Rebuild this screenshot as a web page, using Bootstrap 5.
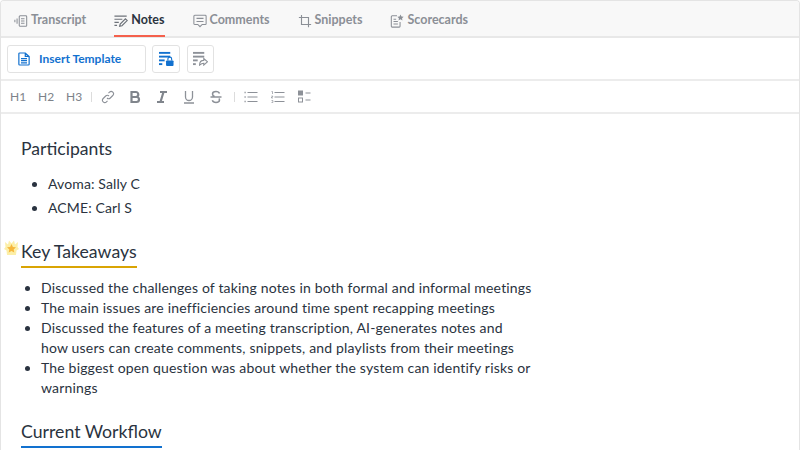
<!DOCTYPE html>
<html lang="en">
<head>
  <meta charset="UTF-8">
  <title>Notes</title>
  <link href="https://cdn.jsdelivr.net/npm/bootstrap@5.3.3/dist/css/bootstrap.min.css" rel="stylesheet">
  <style>
    html, body { height: 450px; overflow: hidden; }
    body { font-family: "Lato", sans-serif; color: #2a3340; background: #fff; }
    .shell { height: 450px; border: 1px solid #e4e4e4; border-bottom: 0; border-radius: 4px 4px 0 0; overflow: hidden; }

    /* onglets */
    .tabbar { height: 37px; background: #f8f8f8; border-bottom: 2px solid #e8e8e8; padding-left: 13px; gap: 28px; }
    .tab-item { height: 36px; padding-top: 5px; font-size: 12.5px; font-weight: 700; color: #8b8f96; gap: 3px; border-bottom: 2px solid transparent; }
    .tab-item svg { width: 14px; height: 14px; }
    .tab-item.is-active { color: #2b3440; border-bottom-color: #f4604c; }

    /* barre du template */
    .tplbar { height: 43px; border-bottom: 2px solid #ececec; padding: 6px; gap: 6px; }
    .tpl-btn { width: 139px; height: 28px; border: 1px solid #e2e2e2; border-radius: 3px; background: #fff; color: #1271cf; font-size: 12px; font-weight: 700; gap: 9px; padding: 0 0 0 10px; }
    .tpl-icon { width: 28px; height: 28px; border: 1px solid #e2e2e2; border-radius: 3px; background: #fff; padding: 0; }
    .tpl-icon + .tpl-icon { margin-left: 1px; width: 27px; }

    /* barre de l'éditeur */
    .edbar { height: 33px; border-bottom: 2px solid #ececec; padding-left: 9px; color: #8d9198; }
    .ed-h { font-size: 12px; font-weight: 400; width: 28px; padding-top: 1px; color: #7d8289; }
    .ed-sep { width: 1px; height: 10px; background: #dcdcdc; margin-left: -3px; margin-right: 9px; }
    .ed-sep.tail { margin-left: -2px; }
    .ed-ico { width: 27px; }
    .ed-ico svg { width: 14px; height: 14px; }

    /* contenu */
    .note-body { padding: 23px 20px 0; position: relative; }
    .note-title { font-size: 17.6px; font-weight: 400; line-height: 24px; margin: 0; color: #2a3340; }
    .bullets-a { font-size: 14px; line-height: 24px; margin: 11px 0 0; padding-left: 27px; letter-spacing: .12px; }
    .bullets-b { font-size: 14px; line-height: 20px; margin: 10px 0 0; padding-left: 20px; width: 512px; letter-spacing: .17px; }
    .key-head { display: inline-block; font-size: 17.7px; line-height: 24px; padding: 0 0 2px 0; margin-top: 20px; position: relative; }
    .key-head.gold { border-bottom: 2px solid #d9a404; }
    .key-head.blue { border-bottom: 2px solid #1271cf; margin-top: 22px; }
    .sparkle { position: absolute; left: -17px; top: 0; width: 15px; height: 16px; }
  </style>
</head>
<body>
<div class="shell">
  <div class="tabbar d-flex align-items-start">
    <div class="tab-item d-flex align-items-center">
      <svg viewBox="0 0 16 16" fill="none" stroke="#8b8f96" stroke-width="1.2"><rect x="6" y="2" width="8.500" height="12" rx="1"/><path d="M8 5.500h4M8 8h4M8 10.500h4M1 6.500v3M3.500 5v6"/></svg>Transcript
    </div>
    <div class="tab-item is-active d-flex align-items-center">
      <svg viewBox="0 0 16 16" fill="none" stroke="#6d7279" stroke-width="1.400"><path d="M0.500 2.500h14M0.500 6h9M0.500 9.500h5M0.500 13h3M6.500 14l.6-2.600L13 5.500l2 2-5.900 5.900z"/></svg>Notes
    </div>
    <div class="tab-item d-flex align-items-center">
      <svg viewBox="0 0 16 16" fill="none" stroke="#8b8f96" stroke-width="1.200"><path d="M2 1.500h12a1 1 0 0 1 1 1v8.500a1 1 0 0 1-1 1h-3.500L8 14.500 5.500 12H2a1 1 0 0 1-1-1V2.500a1 1 0 0 1 1-1zM4 5h8M4 8.500h8"/></svg>Comments
    </div>
    <div class="tab-item d-flex align-items-center">
      <svg viewBox="0 0 16 16" fill="none" stroke="#8b8f96" stroke-width="1.300"><path d="M4 1v11h11M1 4h11v11"/></svg>Snippets
    </div>
    <div class="tab-item d-flex align-items-center">
      <svg viewBox="0 0 16 16" fill="none" stroke="#8b8f96" stroke-width="1.200"><path d="M8 2H2.500a1 1 0 0 0-1 1v11a1 1 0 0 0 1 1h8a1 1 0 0 0 1-1V9M4 6h3M4 8.500h5M4 11.500h5"/><path d="M12 .5l1.100 2.300 2.500.3-1.800 1.700.4 2.500-2.200-1.200-2.200 1.200.4-2.500-1.800-1.700 2.500-.3z" fill="#8b8f96" stroke="none"/></svg>Scorecards
    </div>
  </div>

  <div class="tplbar d-flex align-items-center">
    <button class="tpl-btn d-flex align-items-center" type="button">
      <svg width="12" height="14" viewBox="0 0 14 16" fill="none" stroke="#1271cf" stroke-width="1.400"><path d="M2 1h6.500L13 5v9a1 1 0 0 1-1 1H2a1 1 0 0 1-1-1V2a1 1 0 0 1 1-1zM8.500 1v4H13M3.500 7.500h7M3.500 10h7M3.500 12.500h7"/></svg>
      Insert Template
    </button>
    <button class="tpl-icon d-flex align-items-center justify-content-center" type="button">
      <svg width="15" height="15" viewBox="0 0 16 16"><g fill="#1271cf"><rect x="0" y="1" width="12" height="2"/><rect x="0" y="5" width="12" height="2"/><rect x="0" y="9" width="6" height="2"/><rect x="0" y="13" width="3.500" height="2"/><rect x="7.500" y="10" width="8" height="6" rx="1"/></g><path d="M9.500 10V8.500a2 2 0 0 1 4 0V10" fill="none" stroke="#1271cf" stroke-width="1.200"/></svg>
    </button>
    <button class="tpl-icon d-flex align-items-center justify-content-center" type="button">
      <svg width="15" height="15" viewBox="0 0 16 16"><g fill="#8d9198"><rect x="0" y="1" width="12" height="2"/><rect x="0" y="5" width="12" height="2"/><rect x="0" y="9" width="5" height="2"/><rect x="0" y="13" width="3" height="2"/></g><path d="M7 15c0-3 2-5 4.500-5V8l4 3.500-4 3.500v-2c-1.800 0-3 .6-4.500 2z" fill="none" stroke="#8d9198" stroke-width="1.200"/></svg>
    </button>
  </div>

  <div class="edbar d-flex align-items-center">
    <span class="ed-h">H1</span><span class="ed-h">H2</span><span class="ed-h">H3</span>
    <span class="ed-sep"></span>
    <span class="ed-ico d-flex"><svg viewBox="0 0 14 14" fill="none" stroke="#8d9198" stroke-width="1.100"><path d="M6 8a2.300 2.300 0 0 0 3.300 0l2.500-2.500a2.300 2.300 0 0 0-3.300-3.300L7.500 3.200M8 6a2.300 2.300 0 0 0-3.300 0L2.200 8.500a2.300 2.300 0 0 0 3.300 3.300l1-1"/></svg></span>
    <span class="ed-ico d-flex"><svg viewBox="0 0 14 14" fill="none" stroke="#80858c" stroke-width="2.200"><path d="M3.500 2h4.300a2.400 2.400 0 0 1 0 5H3.500zM3.500 7h5a2.500 2.500 0 0 1 0 5h-5zM3.500 1v12"/></svg></span>
    <span class="ed-ico d-flex"><svg viewBox="0 0 14 14" fill="none" stroke="#80858c" stroke-width="2.200"><path d="M5 2h7M2 12h7M8.500 2l-3 10"/></svg></span>
    <span class="ed-ico d-flex"><svg viewBox="0 0 14 14" fill="none" stroke="#8d9198" stroke-width="1.300"><path d="M3.500 1v6a3.500 3.500 0 0 0 7 0V1M2 13h10"/></svg></span>
    <span class="ed-ico d-flex"><svg viewBox="0 0 14 14" fill="none" stroke="#8d9198" stroke-width="1.500"><path d="M10.500 3.500C10 2 8.500 1.500 7 1.500c-2 0-3.500 1-3.500 2.500 0 1.200.8 2 2 2.500M1.500 7h11M9.800 8.500c.5.500.7 1 .7 1.600 0 1.500-1.500 2.400-3.500 2.400-1.700 0-3.200-.7-3.700-2.200"/></svg></span>
    <span class="ed-sep tail"></span>
    <span class="ed-ico d-flex"><svg viewBox="0 0 14 14" fill="none" stroke="#8d9198" stroke-width="1"><path d="M3.500 2.500h10M3.500 7h10M3.500 11.500h10"/><path d="M.5 2.500h1.200M.5 7h1.200M.5 11.500h1.200" stroke-width="1.400"/></svg></span>
    <span class="ed-ico d-flex"><svg viewBox="0 0 14 14" fill="none" stroke="#8d9198" stroke-width="1"><path d="M3.500 2.500h10M3.500 7h10M3.500 11.500h10"/><path d="M.5 1.500h1v2.500M.5 6h1.200v1H.5v1h1.400M.5 10.500h1.400v2H.5" stroke-width=".7"/></svg></span>
    <span class="ed-ico d-flex"><svg viewBox="0 0 14 14" fill="none" stroke="#8d9198" stroke-width="1"><rect x=".5" y="1" width="4" height="4" fill="#8d9198"/><rect x=".5" y="8" width="4" height="4"/><path d="M7.500 3h5M7.500 10h5" stroke-width="1.200"/></svg></span>
  </div>

  <div class="note-body">
    <h2 class="note-title">Participants</h2>
    <ul class="bullets-a">
      <li>Avoma: Sally C</li>
      <li>ACME: Carl S</li>
    </ul>
    <div class="key-head gold">
      <svg class="sparkle" viewBox="0 0 15 16"><path d="M1 2l3 2.500L5 .5l2.500 3L10 .5l1 4 3-2.500-.5 5L15 9l-2.500 1.500L12 15H3l-.5-4.500L0 9l1.500-2z" fill="#fcefa8"/><path d="M7.500 4l1.400 2.900 3.100.4-2.300 2.100.6 3.100-2.800-1.500-2.800 1.500.6-3.100L3 7.300l3.100-.4z" fill="#f6b73c"/></svg>
      Key Takeaways
    </div>
    <ul class="bullets-b">
      <li>Discussed the challenges of taking notes in both formal and informal meetings</li>
      <li>The main issues are inefficiencies around time spent recapping meetings</li>
      <li>Discussed the features of a meeting transcription, AI-generates notes and how users can create comments, snippets, and playlists from their meetings</li>
      <li>The biggest open question was about whether the system can identify risks or warnings</li>
    </ul>
    <div></div>
    <div class="key-head blue">Current Workflow</div>
  </div>
</div>
<script src="https://cdn.jsdelivr.net/npm/bootstrap@5.3.3/dist/js/bootstrap.bundle.min.js"></script>
</body>
</html>
